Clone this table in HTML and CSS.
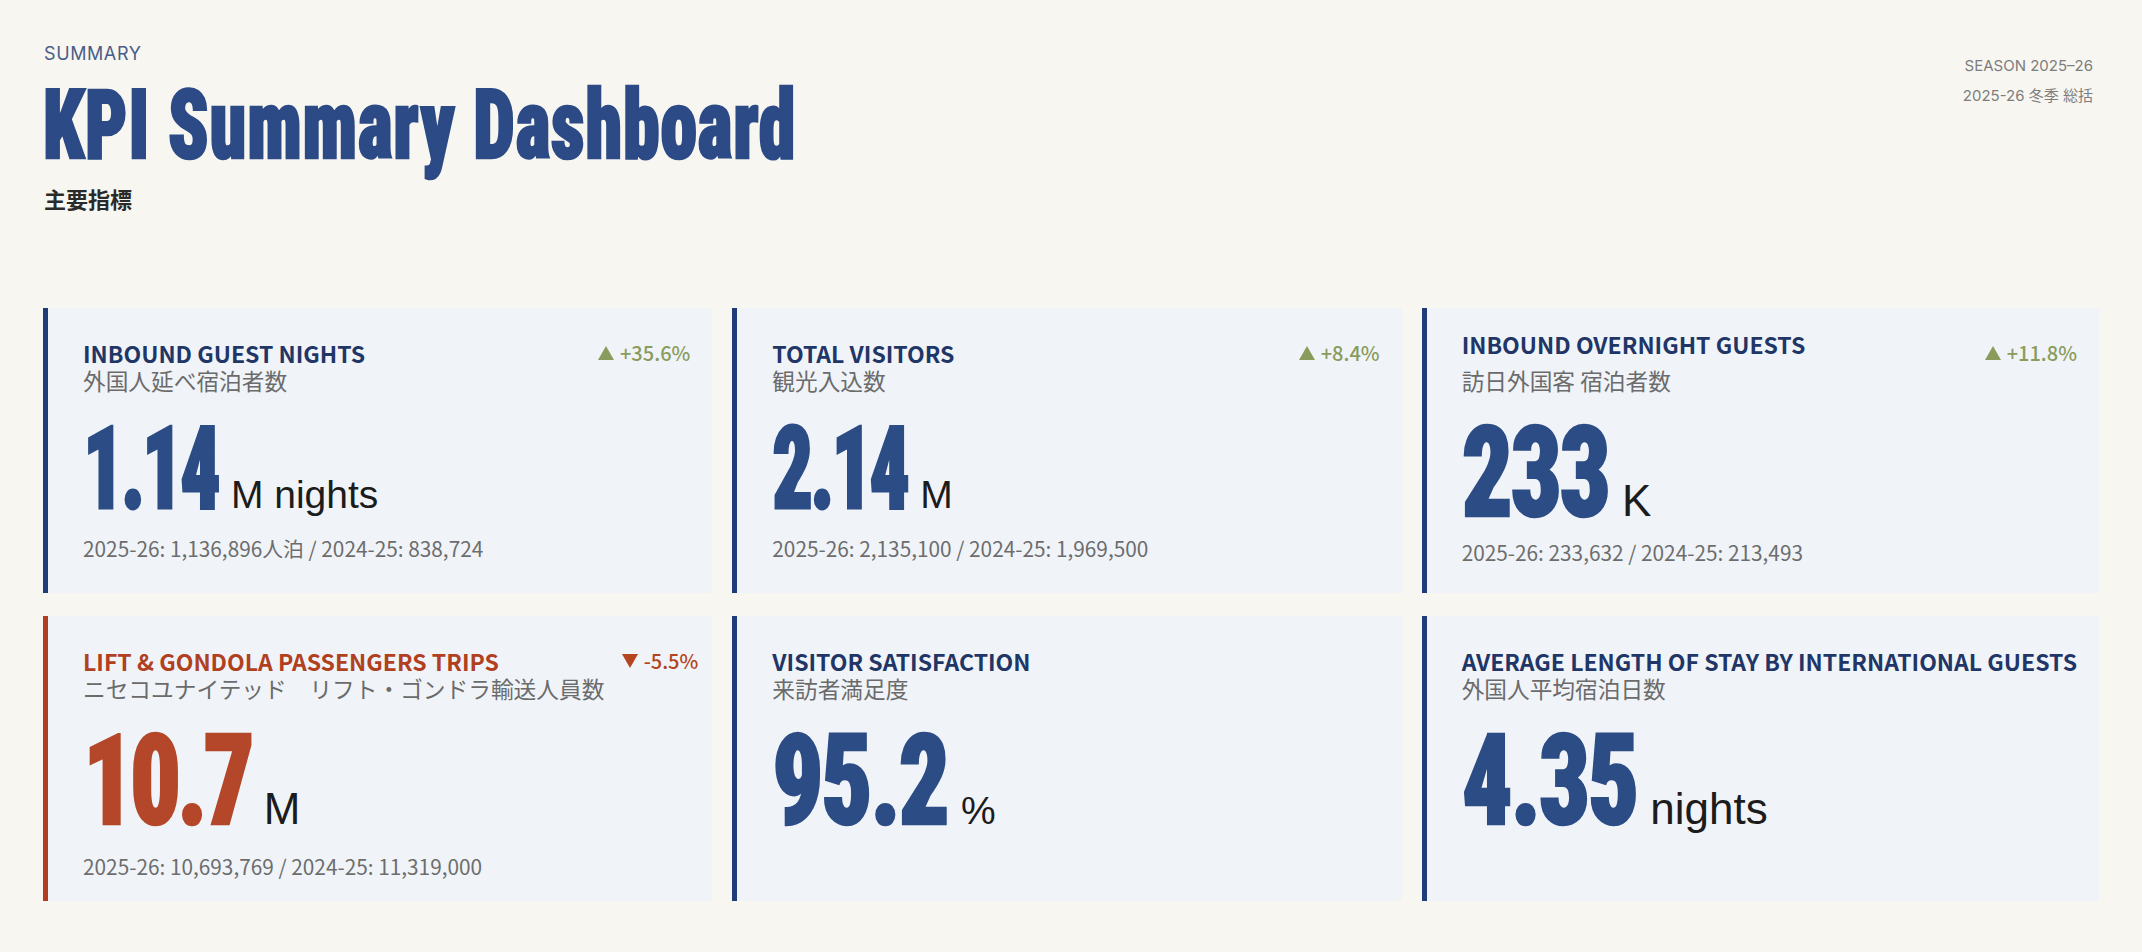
FILE: index.html
```html
<!DOCTYPE html>
<html lang="ja">
<head>
<meta charset="utf-8">
<title>KPI Summary Dashboard</title>
<link rel="stylesheet" href="styles.css">
</head>
<body>
<main class="page">
  <header class="head">
    <div class="head-main">
      <p class="eyebrow">SUMMARY</p>
      <h1 class="title">KPI Summary Dashboard</h1>
      <p class="head-sub">主要指標</p>
    </div>
    <div class="season">
      <p class="season-line">SEASON 2025–26</p>
      <p class="season-line">2025-26 冬季 総括</p>
    </div>
  </header>

  <section class="grid">
    <article class="kpi">
      <span class="delta delta--up"><svg class="delta-icon" viewBox="0 0 16 14"><polygon points="8,0 16,14 0,14"/></svg>+35.6%</span>
      <h2 class="kpi-label">INBOUND GUEST NIGHTS</h2>
      <p class="kpi-sub">外国人延べ宿泊者数</p>
      <p class="kpi-value"><span class="kpi-num">1.14</span><span class="kpi-unit">M nights</span></p>
      <p class="kpi-foot">2025-26: 1,136,896人泊 / 2024-25: 838,724</p>
    </article>

    <article class="kpi">
      <span class="delta delta--up"><svg class="delta-icon" viewBox="0 0 16 14"><polygon points="8,0 16,14 0,14"/></svg>+8.4%</span>
      <h2 class="kpi-label">TOTAL VISITORS</h2>
      <p class="kpi-sub">観光入込数</p>
      <p class="kpi-value"><span class="kpi-num">2.14</span><span class="kpi-unit">M</span></p>
      <p class="kpi-foot">2025-26: 2,135,100 / 2024-25: 1,969,500</p>
    </article>

    <article class="kpi kpi--lead">
      <span class="delta delta--up"><svg class="delta-icon" viewBox="0 0 16 14"><polygon points="8,0 16,14 0,14"/></svg>+11.8%</span>
      <h2 class="kpi-label">INBOUND OVERNIGHT GUESTS</h2>
      <p class="kpi-sub">訪日外国客 宿泊者数</p>
      <p class="kpi-value kpi-value--lead"><span class="kpi-num kpi-num--xl">233</span><span class="kpi-unit kpi-unit--lg">K</span></p>
      <p class="kpi-foot">2025-26: 233,632 / 2024-25: 213,493</p>
    </article>

    <article class="kpi kpi--alert">
      <span class="delta delta--down"><svg class="delta-icon" viewBox="0 0 16 14"><polygon points="0,0 16,0 8,14"/></svg>-5.5%</span>
      <h2 class="kpi-label">LIFT &amp; GONDOLA PASSENGERS TRIPS</h2>
      <p class="kpi-sub">ニセコユナイテッド　リフト・ゴンドラ輸送人員数</p>
      <p class="kpi-value kpi-value--xl"><span class="kpi-num kpi-num--xl kpi-num--tight">10.7</span><span class="kpi-unit kpi-unit--lg">M</span></p>
      <p class="kpi-foot">2025-26: 10,693,769 / 2024-25: 11,319,000</p>
    </article>

    <article class="kpi">
      <h2 class="kpi-label">VISITOR SATISFACTION</h2>
      <p class="kpi-sub">来訪者満足度</p>
      <p class="kpi-value kpi-value--xl"><span class="kpi-num kpi-num--xl">95.2</span><span class="kpi-unit">%</span></p>
    </article>

    <article class="kpi">
      <h2 class="kpi-label">AVERAGE LENGTH OF STAY BY INTERNATIONAL GUESTS</h2>
      <p class="kpi-sub">外国人平均宿泊日数</p>
      <p class="kpi-value kpi-value--xl"><span class="kpi-num kpi-num--xl">4.35</span><span class="kpi-unit kpi-unit--lg">nights</span></p>
    </article>
  </section>
</main>
</body>
</html>
```
FILE: styles.css
```css
* { box-sizing: border-box; }
html, body { margin: 0; padding: 0; }
body {
  background: #f8f6f1;
  font-family: "Noto Sans CJK JP", "Noto Sans", sans-serif;
  color: #333;
}
p, h1, h2 { margin: 0; font-weight: inherit; }

.page {
  padding: 44px 43px 0 43px;
}

/* header */
.head {
  display: flex;
  justify-content: space-between;
  align-items: flex-start;
}
.eyebrow {
  font-family: "Inter", "Noto Sans", sans-serif;
  font-size: 18px;
  line-height: 20px;
  letter-spacing: 0.6px;
  color: #4a5d88;
  padding-left: 1px;
}
.title {
  margin-top: 32px;
  font-family: "Roboto", sans-serif;
  font-weight: 900;
  font-stretch: 75%;
  font-size: 74px;
  line-height: 74px;
  letter-spacing: 0.85px;
  color: #2c4a85;
  -webkit-text-stroke: 2px #2c4a85;
  transform: scaleY(1.3);
  transform-origin: 0 84%;
  white-space: nowrap;
}
.head-sub {
  margin-top: 14px;
  font-size: 22px;
  line-height: 28px;
  font-weight: 700;
  color: #2a2a2a;
  padding-left: 1px;
}
.season {
  margin-top: 7px;
  margin-right: 6px;
  text-align: right;
  font-family: "Inter", "Noto Sans CJK JP", sans-serif;
  font-size: 15px;
  line-height: 30px;
  color: #7d7d7d;
}

/* grid */
.grid {
  margin-top: 96px;
  display: grid;
  grid-template-columns: repeat(3, 1fr);
  grid-template-rows: 285px 285px;
  column-gap: 20px;
  row-gap: 23px;
}
.kpi {
  position: relative;
  display: flex;
  flex-direction: column;
  background: #f0f4f9;
  border-left: 5px solid #1f3b78;
  padding: 31px 22px 0 35px;
}
.kpi--lead { padding-top: 22px; }
.kpi--lead .kpi-label { margin-bottom: 9px; }
.kpi--alert { border-left-color: #b33c1d; }

.delta {
  position: absolute;
  top: 33px;
  right: 22px;
  display: flex;
  align-items: center;
  gap: 6px;
  font-size: 20px;
  line-height: 24px;
  font-weight: 500;
}
.kpi--alert .delta { right: 14px; }
.delta-icon { width: 16px; height: 14px; fill: currentColor; }
.delta--up { color: #8a9c5c; }
.delta--down { color: #b5451f; }

.kpi-label {
  font-size: 23px;
  line-height: 28px;
  font-weight: 700;
  color: #1f3666;
  white-space: nowrap;
}
.kpi--alert .kpi-label { color: #b1401f; }
.kpi-sub {
  font-size: 22.7px;
  line-height: 28px;
  color: #6b6b6b;
  white-space: nowrap;
}

.kpi-value {
  display: flex;
  align-items: baseline;
  line-height: 1;
  margin: 46px 0 12.8px;
}
.kpi-value--xl { margin: 37px 0 11.5px; }
.kpi-value--lead { margin: 37px 0 5.5px; }

.kpi-num {
  display: inline-block;
  font-family: "Roboto", sans-serif;
  font-weight: 900;
  font-stretch: 75%;
  font-size: 80px;
  letter-spacing: -3px;
  color: #2c4c85;
  -webkit-text-stroke: 2px currentColor;
  transform: scaleY(1.44);
  transform-origin: 0 84%;
}
.kpi-num--xl {
  font-size: 100px;
  letter-spacing: -2px;
  transform: scaleY(1.266);
}
.kpi-num--tight { letter-spacing: -4px; }
.kpi--alert .kpi-num { color: #b4472a; }

.kpi-unit {
  margin-left: 13px;
  font-family: "Liberation Sans", Arial, sans-serif;
  font-size: 39px;
  color: #1c1c1c;
}
.kpi-unit--lg { font-size: 44px; }

.kpi-foot {
  font-size: 20.8px;
  line-height: 28px;
  color: #6d6d6d;
  white-space: nowrap;
}
```
